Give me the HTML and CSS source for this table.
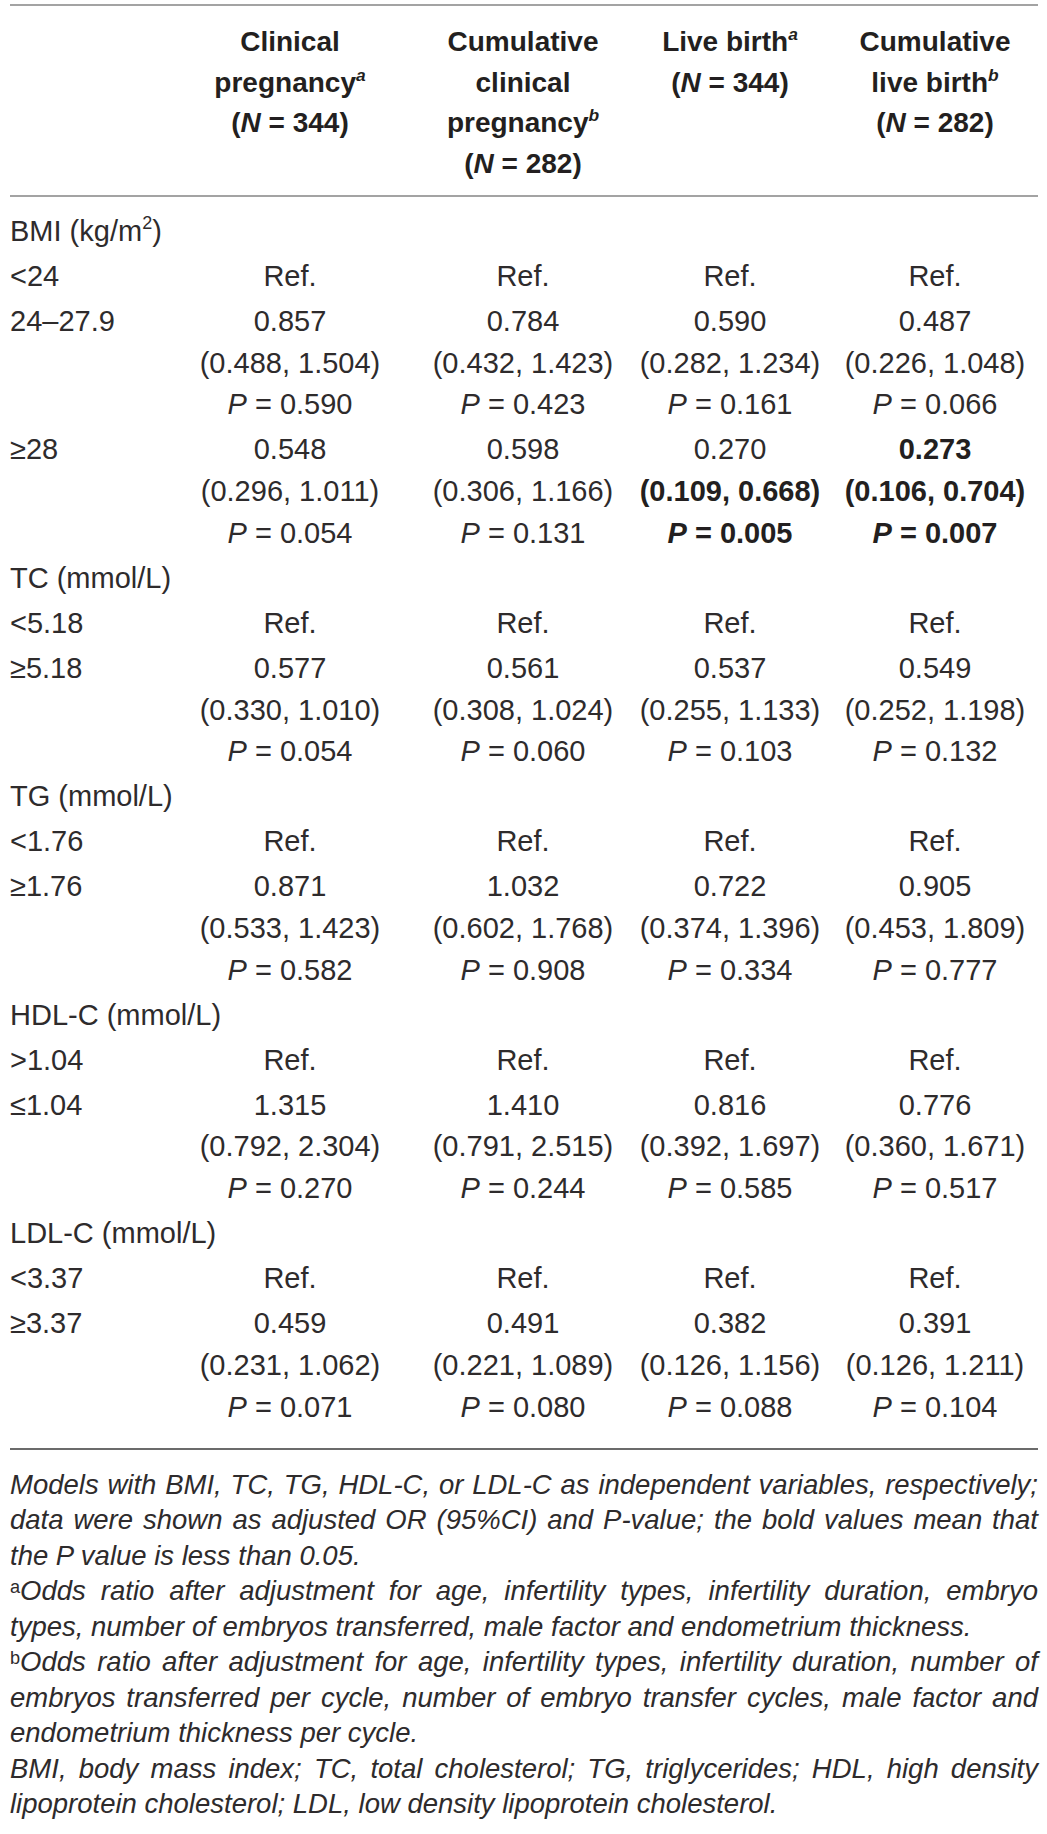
FILE: index.html
```html
<!DOCTYPE html>
<html lang="en">
<head>
    <meta charset="UTF-8">
    <title>Adjusted OR by lipid and BMI category</title>
    <link rel="stylesheet" href="styles.css">
</head>
<body>
    <div class="page">
        <table class="results">
            <colgroup>
                <col class="col-label">
                <col class="col-1">
                <col class="col-2">
                <col class="col-3">
                <col class="col-4">
            </colgroup>
            <thead>
                <tr>
                    <th></th>
                    <th>Clinical<br>pregnancy<sup>a</sup><br>(<i>N</i> = 344)</th>
                    <th>Cumulative<br>clinical<br>pregnancy<sup>b</sup><br>(<i>N</i> = 282)</th>
                    <th>Live birth<sup>a</sup><br>(<i>N</i> = 344)</th>
                    <th>Cumulative<br>live birth<sup>b</sup><br>(<i>N</i> = 282)</th>
                </tr>
            </thead>
            <tbody>
                <tr class="first">
                    <td class="label" colspan="5">BMI (kg/m<sup class="unit">2</sup>)</td>
                </tr>
                <tr>
                    <td class="label">&lt;24</td>
                    <td>Ref.</td><td>Ref.</td><td>Ref.</td><td>Ref.</td>
                </tr>
                <tr>
                    <td class="label">24–27.9</td>
                    <td>0.857<br>(0.488, 1.504)<br><i>P</i> = 0.590</td>
                    <td>0.784<br>(0.432, 1.423)<br><i>P</i> = 0.423</td>
                    <td>0.590<br>(0.282, 1.234)<br><i>P</i> = 0.161</td>
                    <td>0.487<br>(0.226, 1.048)<br><i>P</i> = 0.066</td>
                </tr>
                <tr>
                    <td class="label">≥28</td>
                    <td>0.548<br>(0.296, 1.011)<br><i>P</i> = 0.054</td>
                    <td>0.598<br>(0.306, 1.166)<br><i>P</i> = 0.131</td>
                    <td>0.270<br><b>(0.109, 0.668)</b><br><b><i>P</i> = 0.005</b></td>
                    <td class="sig">0.273<br>(0.106, 0.704)<br><i>P</i> = 0.007</td>
                </tr>

                <tr>
                    <td class="label" colspan="5">TC (mmol/L)</td>
                </tr>
                <tr>
                    <td class="label">&lt;5.18</td>
                    <td>Ref.</td><td>Ref.</td><td>Ref.</td><td>Ref.</td>
                </tr>
                <tr>
                    <td class="label">≥5.18</td>
                    <td>0.577<br>(0.330, 1.010)<br><i>P</i> = 0.054</td>
                    <td>0.561<br>(0.308, 1.024)<br><i>P</i> = 0.060</td>
                    <td>0.537<br>(0.255, 1.133)<br><i>P</i> = 0.103</td>
                    <td>0.549<br>(0.252, 1.198)<br><i>P</i> = 0.132</td>
                </tr>

                <tr>
                    <td class="label" colspan="5">TG (mmol/L)</td>
                </tr>
                <tr>
                    <td class="label">&lt;1.76</td>
                    <td>Ref.</td><td>Ref.</td><td>Ref.</td><td>Ref.</td>
                </tr>
                <tr>
                    <td class="label">≥1.76</td>
                    <td>0.871<br>(0.533, 1.423)<br><i>P</i> = 0.582</td>
                    <td>1.032<br>(0.602, 1.768)<br><i>P</i> = 0.908</td>
                    <td>0.722<br>(0.374, 1.396)<br><i>P</i> = 0.334</td>
                    <td>0.905<br>(0.453, 1.809)<br><i>P</i> = 0.777</td>
                </tr>

                <tr>
                    <td class="label" colspan="5">HDL-C (mmol/L)</td>
                </tr>
                <tr>
                    <td class="label">&gt;1.04</td>
                    <td>Ref.</td><td>Ref.</td><td>Ref.</td><td>Ref.</td>
                </tr>
                <tr>
                    <td class="label">≤1.04</td>
                    <td>1.315<br>(0.792, 2.304)<br><i>P</i> = 0.270</td>
                    <td>1.410<br>(0.791, 2.515)<br><i>P</i> = 0.244</td>
                    <td>0.816<br>(0.392, 1.697)<br><i>P</i> = 0.585</td>
                    <td>0.776<br>(0.360, 1.671)<br><i>P</i> = 0.517</td>
                </tr>

                <tr>
                    <td class="label" colspan="5">LDL-C (mmol/L)</td>
                </tr>
                <tr>
                    <td class="label">&lt;3.37</td>
                    <td>Ref.</td><td>Ref.</td><td>Ref.</td><td>Ref.</td>
                </tr>
                <tr class="last">
                    <td class="label">≥3.37</td>
                    <td>0.459<br>(0.231, 1.062)<br><i>P</i> = 0.071</td>
                    <td>0.491<br>(0.221, 1.089)<br><i>P</i> = 0.080</td>
                    <td>0.382<br>(0.126, 1.156)<br><i>P</i> = 0.088</td>
                    <td>0.391<br>(0.126, 1.211)<br><i>P</i> = 0.104</td>
                </tr>
            </tbody>
        </table>

        <div class="notes">
            <p>Models with BMI, TC, TG, HDL-C, or LDL-C as independent variables, respectively; data were shown as adjusted OR (95%CI) and P-value; the bold values mean that the P value is less than 0.05.</p>
            <p><sup>a</sup>Odds ratio after adjustment for age, infertility types, infertility duration, embryo types, number of embryos transferred, male factor and endometrium thickness.</p>
            <p><sup>b</sup>Odds ratio after adjustment for age, infertility types, infertility duration, number of embryos transferred per cycle, number of embryo transfer cycles, male factor and endometrium thickness per cycle.</p>
            <p>BMI, body mass index; TC, total cholesterol; TG, triglycerides; HDL, high density lipoprotein cholesterol; LDL, low density lipoprotein cholesterol.</p>
        </div>
    </div>
</body>
</html>
```

FILE: styles.css
```css
/* Base */
* {
    margin: 0;
    padding: 0;
    box-sizing: border-box;
}

body {
    font-family: "Liberation Sans", Arial, sans-serif;
    background-color: #fff;
    color: #231f20;
}

.page {
    padding: 4px 9px 0 10px;
}

/* Table */
.results {
    width: 1028px;
    border-collapse: collapse;
    table-layout: fixed;
    border-top: 2px solid #a3a3a3;
}

.col-label { width: 152px; }
.col-1 { width: 256px; }
.col-2 { width: 210px; }
.col-3 { width: 204px; }
.col-4 { width: 206px; }

.results th {
    font-size: 28px;
    font-weight: bold;
    line-height: 40.5px;
    text-align: center;
    vertical-align: top;
    padding: 16px 4px 11px;
    border-bottom: 2px solid #a3a3a3;
}

.results sup {
    font-size: 0.62em;
    line-height: 0;
    vertical-align: 0.65em;
}

.results th sup {
    font-style: italic;
}

.results td {
    font-size: 29px;
    line-height: 41.6px;
    color: #2e2b2c;
    text-align: center;
    vertical-align: top;
    padding: 2px 2px 1.5px;
    white-space: nowrap;
}

.results td.label {
    text-align: left;
    padding-left: 0;
}

.results td.sig,
.results td b {
    font-weight: bold;
    color: #231f20;
}

.results tr.first td {
    padding-top: 14px;
}

.results tr.last td {
    padding-bottom: 19.75px;
    border-bottom: 2px solid #6b6b6b;
}

/* Footnotes */
.notes {
    margin-top: 17px;
    font-size: 27.5px;
    line-height: 35.5px;
    font-style: italic;
    text-align: justify;
    color: #2e2b2c;
}

.notes sup {
    font-style: normal;
    font-size: 0.66em;
    line-height: 0;
    vertical-align: 0.4em;
}
```
